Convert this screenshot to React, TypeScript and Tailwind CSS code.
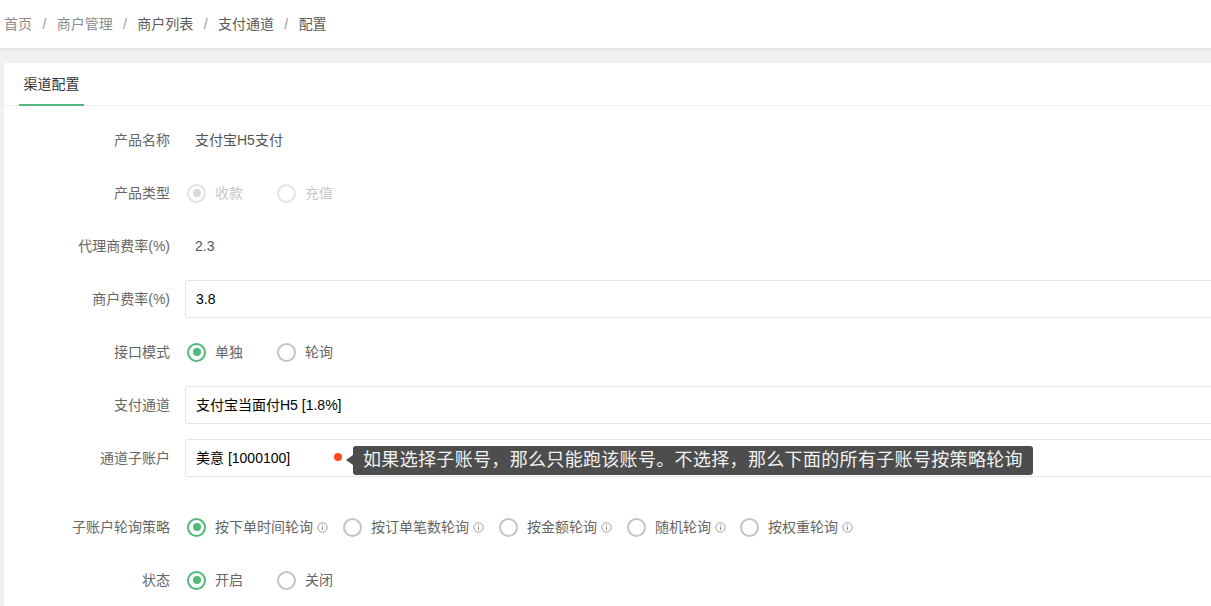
const crumbs = [
  { label: '首页', muted: true },
  { label: '商户管理', muted: true },
  { label: '商户列表', muted: false },
  { label: '支付通道', muted: false },
  { label: '配置', muted: false },
];

const strategies = [
  { label: '按下单时间轮询', checked: true, className: 'mr-[15px]' },
  { label: '按订单笔数轮询', checked: false, className: 'mr-[15px]' },
  { label: '按金额轮询', checked: false, className: 'mr-[15px]' },
  { label: '随机轮询', checked: false, className: 'mr-[14px]' },
  { label: '按权重轮询', checked: false, className: '' },
];

function InfoIcon() {
  return (
    <svg width="11" height="11" viewBox="0 0 11 11" fill="none" stroke="#888" aria-hidden className="mt-px ml-1 shrink-0">
      <circle cx="5.5" cy="5.5" r="4.7" strokeWidth="0.8" />
      <path d="M5.5 4.8v3.2" strokeWidth="1" />
      <path d="M5.5 2.8v1" strokeWidth="1" />
    </svg>
  );
}

function Radio({ label, checked, disabled }: { label: string; checked?: boolean; disabled?: boolean }) {
  const ring = disabled
    ? 'border-[#e3e3e3]'
    : checked
      ? 'border-[#52b97b]'
      : 'border-[#c4c4c4]';
  const dot = disabled ? 'bg-[#d8d8d8]' : 'bg-[#52b97b]';
  return (
    <span className="flex items-center">
      <span className={`grid h-[19px] w-[19px] place-items-center rounded-full border-2 bg-white ${ring}`}>
        {checked && <span className={`h-2 w-2 rounded-full ${dot}`} />}
      </span>
      <span className={`ml-[9px] pt-px ${disabled ? 'text-[#c8c8c8]' : 'text-[#666]'}`}>{label}</span>
    </span>
  );
}

function Row({ label, children, className = '' }: { label: string; children: React.ReactNode; className?: string }) {
  return (
    <div className={`mb-[15px] flex h-[38px] items-center ${className}`}>
      <div className="w-[166px] shrink-0 text-right text-[#666]">{label}</div>
      <div className="ml-[15px] flex min-w-0 flex-1 items-center">{children}</div>
    </div>
  );
}

function Field({ value }: { value: string }) {
  return (
    <div className="flex h-[38px] flex-1 items-center rounded-[2px] border border-[#e6e6e6] bg-white pl-[10px] text-black">
      {value}
    </div>
  );
}

export default function App() {
  return (
    <div className="h-[606px] w-[1211px] overflow-hidden bg-[#f0f0f0] font-['Liberation_Sans','Noto_Sans_CJK_SC',sans-serif] text-[14px]">
      <header className="flex h-12 items-center bg-white pl-1 shadow-[0_1px_3px_rgba(0,0,0,0.08)]">
        {crumbs.map((c, i) => (
          <span key={c.label} className="flex items-center">
            {i > 0 && <span className="w-[24.67px] text-center text-[#999]">/</span>}
            <span className={c.muted ? 'text-[#8c8c8c]' : 'text-[#5c5c5c]'}>{c.label}</span>
          </span>
        ))}
      </header>

      <main className="mt-[15px] ml-1 w-[1260px] rounded-[2px] bg-white">
        <div className="flex h-[43px] border-b border-[#f2f2f2] pl-[15px]">
          <div className="flex h-[43px] w-[65px] items-center justify-center border-b-2 border-[#52b97b] pt-[2px] text-[#333]">
            渠道配置
          </div>
        </div>

        <div className="w-[1240px] pt-[15px] pb-4">
          <Row label="产品名称">
            <span className="ml-[10px] text-[#555]">支付宝H5支付</span>
          </Row>
          <Row label="产品类型">
            <span className="ml-[2px] flex gap-[34px]">
              <Radio label="收款" checked disabled />
              <Radio label="充值" disabled />
            </span>
          </Row>
          <Row label="代理商费率(%)">
            <span className="ml-[10px] text-[#555]">2.3</span>
          </Row>
          <Row label="商户费率(%)">
            <Field value="3.8" />
          </Row>
          <Row label="接口模式">
            <span className="ml-[2px] flex gap-[34px]">
              <Radio label="单独" checked />
              <Radio label="轮询" />
            </span>
          </Row>
          <Row label="支付通道">
            <Field value="支付宝当面付H5 [1.8%]" />
          </Row>
          <Row label="通道子账户" className="relative mb-[31px]">
            <Field value="美意 [1000100]" />
            <span className="absolute top-[14px] left-[330px] h-2 w-2 rounded-full bg-[#ff4a1c]" />
            <span className="absolute top-[16px] left-[342px] h-0 w-0 border-y-[5px] border-r-[7px] border-y-transparent border-r-[#4d4d4d]" />
            <span className="absolute top-[7px] left-[349px] flex h-[29px] w-[680px] items-center rounded-[3px] bg-[#4d4d4d] pl-[10px] text-[18px] tracking-[0.33px] whitespace-nowrap text-[#f2f2f2]">
              如果选择子账号，那么只能跑该账号。不选择，那么下面的所有子账号按策略轮询
            </span>
          </Row>
          <Row label="子账户轮询策略">
            <span className="ml-[2px] flex items-center">
              {strategies.map((s) => (
                <span key={s.label} className={`flex items-center ${s.className}`}>
                  <Radio label={s.label} checked={s.checked} />
                  <InfoIcon />
                </span>
              ))}
            </span>
          </Row>
          <Row label="状态">
            <span className="ml-[2px] flex gap-[34px]">
              <Radio label="开启" checked />
              <Radio label="关闭" />
            </span>
          </Row>
        </div>
      </main>
    </div>
  );
}
